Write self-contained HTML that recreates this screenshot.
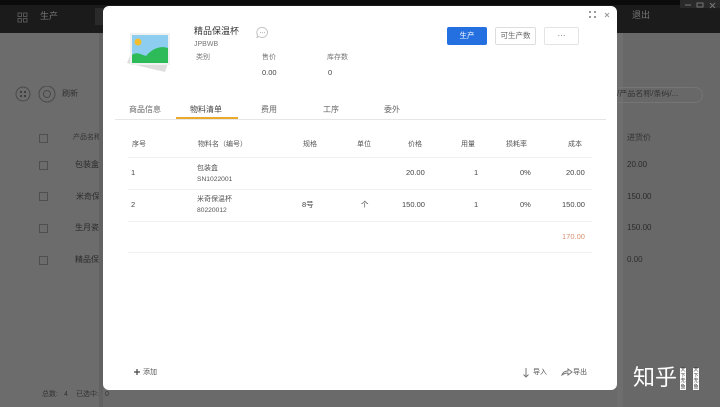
<!DOCTYPE html>
<html><head><meta charset="utf-8">
<style>
*{box-sizing:border-box;margin:0;padding:0}
html,body{width:720px;height:407px;overflow:hidden;background:#6a6a6a;font-family:"Liberation Sans","Noto Sans CJK SC",sans-serif}
.t{position:absolute;white-space:nowrap;line-height:1;font-size:7px;color:#555}
.d{color:#2b2b2b}
.n{font-size:7.5px;color:#444}
.tab{font-size:8px;color:#666}
.l{position:absolute;height:1px;background:#f1f1f1}
.cb{position:absolute;left:39px;width:9px;height:9px;border:1px solid #4f4f4f}
.lg{position:absolute;top:368px;width:6px;height:22px;background:#fff;color:#333;font-size:5px;line-height:5.5px;text-align:center}
</style></head><body>
<div style="position:absolute;left:0;top:0;width:720px;height:33px;background:#1b1b1b"></div>
<div style="position:absolute;left:0;top:0;width:720px;height:5px;background:#0b0b0b"></div>
<div style="position:absolute;left:0;top:33px;width:102px;height:374px;background:#6c6c6c"></div>
<div style="position:absolute;left:95px;top:8px;width:8px;height:17px;background:#2a2a2a"></div>
<svg style="position:absolute;left:17px;top:12px" width="11" height="11"><g fill="none" stroke="#555"><rect x="1" y="1" width="3.5" height="3.5"/><rect x="6.5" y="1" width="3.5" height="3.5"/><rect x="1" y="6.500" width="3.5" height="3.5"/><rect x="6.500" y="6.500" width="3.5" height="3.5"/></g></svg>
<div class="t" style="left:40px;top:12px;font-size:9px;color:#777">生产</div>
<div class="t" style="left:632px;top:11px;font-size:9px;color:#777">退出</div>
<svg style="position:absolute;left:680px;top:0" width="40" height="9"><path d="M-6 0L0 8H40V0Z" fill="#2a2a2a"/><g stroke="#777" fill="none"><path d="M5 5h6"/><rect x="17" y="3" width="6" height="4"/><path d="M30 3l5 5M35 3l-5 5"/></g></svg>
<svg style="position:absolute;left:15px;top:86px" width="64" height="17"><g fill="none" stroke="#4a4a4a"><circle cx="8" cy="8" r="7"/><circle cx="32" cy="8" r="8"/><circle cx="32" cy="8" r="3.5"/></g><g fill="#3f3f3f"><rect x="5" y="5" width="2" height="2"/><rect x="9" y="5" width="2" height="2"/><rect x="5" y="9" width="2" height="2"/><rect x="9" y="9" width="2" height="2"/></g></svg>
<div class="t d" style="left:62px;top:90px;font-size:8px;color:#333">刷新</div>
<div class="cb" style="top:134px"></div><div class="cb" style="top:161px"></div><div class="cb" style="top:192px"></div><div class="cb" style="top:224px"></div><div class="cb" style="top:256px"></div>
<div class="t d" style="left:73px;top:134px;color:#333">产品名称</div>
<div class="t d" style="left:75px;top:161px;font-size:8px">包装盒</div>
<div class="t d" style="left:76px;top:193px;font-size:8px">米奇保温杯</div>
<div class="t d" style="left:75px;top:224px;font-size:8px">生月瓷杯</div>
<div class="t d" style="left:75px;top:256px;font-size:8px">精品保温杯</div>
<div style="position:absolute;left:99px;top:33px;width:4px;height:374px;background:#626262"></div>
<div style="position:absolute;left:617px;top:33px;width:103px;height:374px;background:#686868"></div>
<div style="position:absolute;left:617px;top:33px;width:6px;height:374px;background:#6e6e6e"></div>
<div style="position:absolute;left:617px;top:87px;width:86px;height:16px;border:1px solid #757575;border-left:0;border-radius:0 8px 8px 0"></div>
<div class="t" style="left:617px;top:90px;font-size:8px;color:#333;width:68px;overflow:hidden">/产品名称/条码/...</div>
<div class="t d" style="left:627px;top:134px;font-size:8px;color:#333">进货价</div>
<div class="t d" style="left:627px;top:161px;font-size:8px">20.00</div>
<div class="t d" style="left:627px;top:193px;font-size:8px">150.00</div>
<div class="t d" style="left:627px;top:224px;font-size:8px">150.00</div>
<div class="t d" style="left:627px;top:256px;font-size:8px">0.00</div>
<div class="t d" style="left:42px;top:391px;color:#333">总数:</div><div class="t d" style="left:64px;top:391px;color:#333">4</div>
<div class="t d" style="left:76px;top:391px;color:#333">已选中:</div><div class="t d" style="left:105px;top:391px;color:#333">0</div>

<div style="position:absolute;left:103px;top:6px;width:514px;height:384px;background:#fff;border-radius:6px"></div>
<svg style="position:absolute;left:124px;top:30px" width="52" height="46">
<path d="M6 26L3 33L41 42L44 33Z" fill="#dedede"/>
<rect x="6" y="3" width="40" height="32" fill="#f1f1f1"/>
<rect x="8" y="5" width="36" height="28" fill="#8dcdf0"/>
<circle cx="14" cy="12" r="3.5" fill="#f3bd2f"/>
<path d="M8 25C13 21 18 25 22 26C27 20 35 15 44 18V33H8Z" fill="#2dbb5a"/>
</svg>
<div class="t" style="left:194px;top:27px;font-size:9px;color:#333">精品保温杯</div>
<div class="t" style="left:194px;top:41px;font-size:7px;color:#777">JPBWB</div>
<svg style="position:absolute;left:255px;top:26px" width="14" height="13"><path d="M7 1.500a5.300 5 0 1 1-3 9l-2 1 .5-2.500A5 5 0 0 1 7 1.500Z" fill="none" stroke="#c4c4c4"/><path d="M5 6.500h.8M7 6.500h.8M9 6.500h.8" stroke="#aaa"/></svg>
<div class="t" style="left:196px;top:54px;color:#777">类别</div>
<div class="t" style="left:262px;top:54px;color:#777">售价</div>
<div class="t" style="left:327px;top:54px;color:#777">库存数</div>
<div class="t n" style="left:262px;top:69px">0.00</div>
<div class="t n" style="left:328px;top:69px">0</div>

<div style="position:absolute;left:447px;top:27px;width:40px;height:18px;background:#2470e0;border-radius:2px;color:#fff;font-size:7.5px;text-align:center;line-height:18px">生产</div>
<div style="position:absolute;left:495px;top:27px;width:41px;height:18px;border:1px solid #ddd;border-radius:2px;color:#666;font-size:7.5px;text-align:center;line-height:16px">可生产数</div>
<div style="position:absolute;left:544px;top:27px;width:35px;height:18px;border:1px solid #e4e4e4;border-radius:2px;color:#666;font-size:8px;text-align:center;line-height:16px">···</div>
<svg style="position:absolute;left:589px;top:10px" width="24" height="9"><g fill="#999"><rect x="0" y="1" width="2" height="2"/><rect x="5" y="1" width="2" height="2"/><rect x="0" y="6" width="2" height="2"/><rect x="5" y="6" width="2" height="2"/></g><path d="M16 3l4 4M20 3l-4 4" stroke="#999"/></svg>

<div class="t tab" style="left:129px;top:106px">商品信息</div>
<div class="t tab" style="left:190px;top:106px;color:#444">物料清单</div>
<div class="t tab" style="left:261px;top:106px">费用</div>
<div class="t tab" style="left:323px;top:106px">工序</div>
<div class="t tab" style="left:384px;top:106px">委外</div>
<div style="position:absolute;left:115px;top:119px;width:491px;height:1px;background:#e6e6e6"></div>
<div style="position:absolute;left:176px;top:117px;width:62px;height:2px;background:#e8a92d"></div>

<div class="t" style="left:132px;top:141px">序号</div>
<div class="t" style="left:198px;top:141px">物料名（编号）</div>
<div class="t" style="left:303px;top:141px">规格</div>
<div class="t" style="left:357px;top:141px">单位</div>
<div class="t" style="left:408px;top:141px">价格</div>
<div class="t" style="left:461px;top:141px">用量</div>
<div class="t" style="left:506px;top:141px">损耗率</div>
<div class="t" style="left:568px;top:141px">成本</div>
<div class="l" style="left:128px;top:157px;width:464px"></div>
<div class="l" style="left:128px;top:189px;width:464px"></div>
<div class="l" style="left:128px;top:221px;width:464px"></div>
<div class="l" style="left:128px;top:252px;width:464px"></div>

<div class="t n" style="left:131px;top:169px">1</div>
<div class="t" style="left:197px;top:165px">包装盒</div>
<div class="t" style="left:197px;top:177px;font-size:6.7px">SN1022001</div>
<div class="t n" style="left:406px;top:169px">20.00</div>
<div class="t n" style="left:474px;top:169px">1</div>
<div class="t n" style="left:520px;top:169px">0%</div>
<div class="t n" style="left:566px;top:169px">20.00</div>

<div class="t n" style="left:131px;top:201px">2</div>
<div class="t" style="left:197px;top:196px">米奇保温杯</div>
<div class="t" style="left:197px;top:208px;font-size:6.7px">80220012</div>
<div class="t n" style="left:302px;top:201px">8号</div>
<div class="t n" style="left:361px;top:201px">个</div>
<div class="t n" style="left:402px;top:201px">150.00</div>
<div class="t n" style="left:474px;top:201px">1</div>
<div class="t n" style="left:520px;top:201px">0%</div>
<div class="t n" style="left:562px;top:201px">150.00</div>
<div class="t n" style="left:562px;top:233px;color:#d9906f">170.00</div>

<svg style="position:absolute;left:133px;top:368px" width="8" height="8"><path d="M4 1v6M1 4h6" stroke="#444" stroke-width="1.2"/></svg>
<div class="t" style="left:143px;top:369px">添加</div>
<svg style="position:absolute;left:521px;top:367px" width="10" height="11"><path d="M5 1v9M2.500 7.500L5 10l2.500-2.500" fill="none" stroke="#777"/></svg>
<div class="t" style="left:533px;top:369px">导入</div>
<svg style="position:absolute;left:561px;top:367px" width="12" height="10"><path d="M1 8C2 5 4 4 7 4V2l4 3-4 3V6C5 6 3 6.500 1 8Z" fill="none" stroke="#777"/></svg>
<div class="t" style="left:573px;top:369px">导出</div>

<div class="t" style="left:633px;top:367px;font-size:22px;color:#fff">知乎</div>
<div class="lg" style="left:680px">天下无鱼</div>
<div class="lg" style="left:693px">天下无鱼</div>
</body></html>
